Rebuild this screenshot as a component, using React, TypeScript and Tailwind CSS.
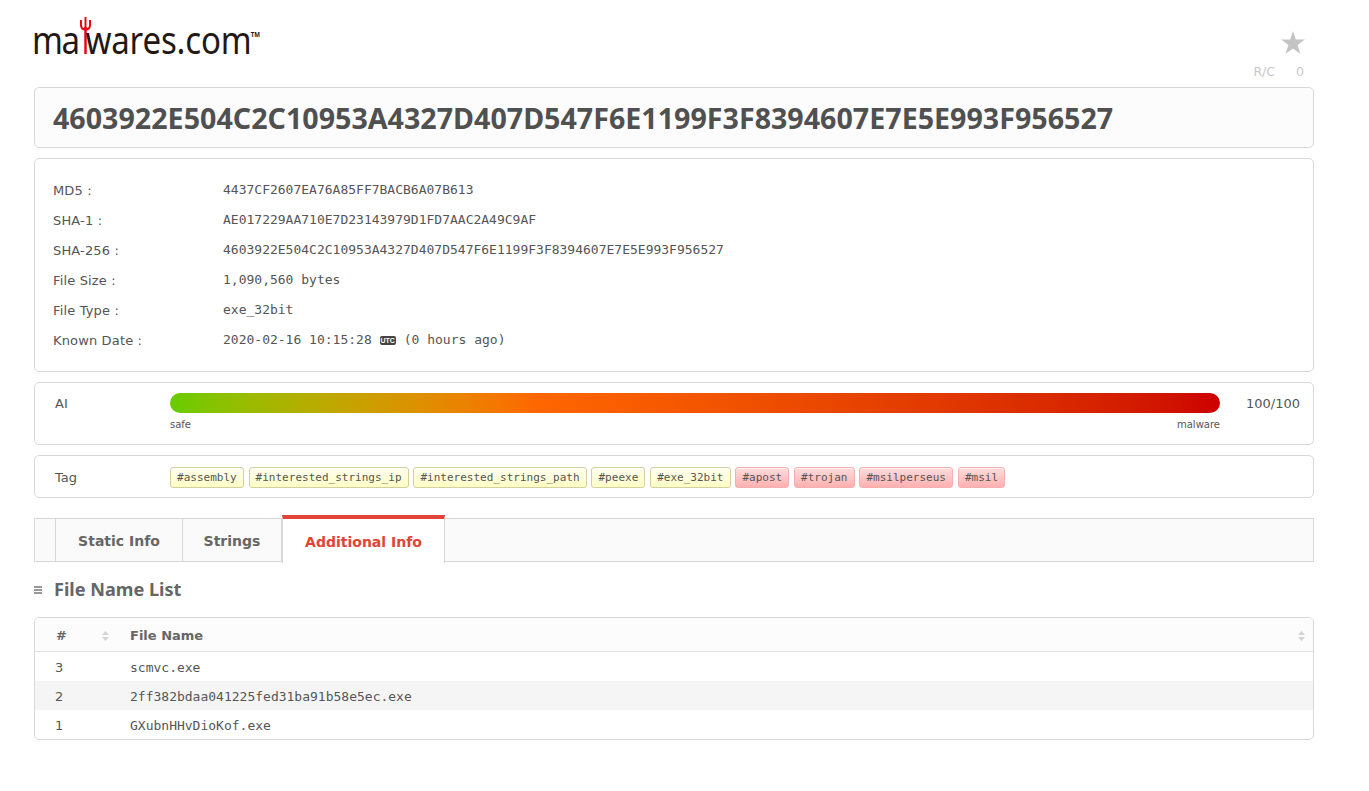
const INFO_ROWS: { label: string; value: React.ReactNode }[] = [
  { label: 'MD5 :', value: '4437CF2607EA76A85FF7BACB6A07B613' },
  { label: 'SHA-1 :', value: 'AE017229AA710E7D23143979D1FD7AAC2A49C9AF' },
  { label: 'SHA-256 :', value: '4603922E504C2C10953A4327D407D547F6E1199F3F8394607E7E5E993F956527' },
  { label: 'File Size :', value: '1,090,560 bytes' },
  { label: 'File Type :', value: 'exe_32bit' },
  {
    label: 'Known Date :',
    value: (
      <span className="flex items-center">
        2020-02-16 10:15:28
        <span className="mx-[8px] h-[9px] w-[16px] rounded-[2px] bg-[#444] text-center font-['Liberation_Sans',sans-serif] text-[7px] leading-[9px] font-bold text-white">
          UTC
        </span>
        (0 hours ago)
      </span>
    ),
  },
]

const YELLOW_TAGS = ['#assembly', '#interested_strings_ip', '#interested_strings_path', '#peexe', '#exe_32bit']
const RED_TAGS = ['#apost', '#trojan', '#msilperseus', '#msil']

const FILES = [
  { id: 3, name: 'scmvc.exe' },
  { id: 2, name: '2ff382bdaa041225fed31ba91b58e5ec.exe' },
  { id: 1, name: 'GXubnHHvDioKof.exe' },
]

function Tag({ text, red }: { text: string; red?: boolean }) {
  return (
    <span
      className={`h-[21px] rounded-[3px] border px-[6px] font-['DejaVu_Sans_Mono',monospace] text-[11px] leading-[20px] tracking-[0.01px] shadow-[inset_0_1px_0_rgba(255,255,255,0.7)] ${
        red
          ? 'border-[#f4b0b0] bg-gradient-to-b from-[#ffdcdc] to-[#ffb0b0] text-[#555]'
          : 'border-[#d3cf9f] bg-gradient-to-b from-[#fffdf0] to-[#ffffc4] text-[#555]'
      }`}
    >
      {text}
    </span>
  )
}

function SortArrows() {
  return (
    <svg width="7" height="10" viewBox="0 0 7 10" className="fill-[#d4d4d4]">
      <path d="M3.5 0 7 4H0z" />
      <path d="M3.5 10 0 6h7z" />
    </svg>
  )
}

function Logo() {
  return (
    <div className="flex h-[37px] origin-left scale-x-[0.87] items-end font-['Noto_Sans',sans-serif] text-[38px] leading-[37px] text-[#231815]">
      <span className="tracking-[-1.5px]">ma</span>
      <svg width="13" height="37" viewBox="0 0 13 37" className="mr-[-6.5px] mb-[3.8px] ml-[1px] shrink-0">
        <path d="M5.1 10h2.8v27H5.1z" fill="#e60012" />
        <path d="M1.3 3v5c0 3 2.3 4.4 5.2 4.4s5.2-1.4 5.2-4.4V3" fill="none" stroke="#e60012" strokeWidth="2.2" />
        <path d="M6.5 0v12" stroke="#e60012" strokeWidth="2.2" />
      </svg>
      <span className="tracking-[-0.18px]">wares.com</span>
      <span className="mb-[20px] ml-[-1px] text-[7px] leading-[6px] font-bold">TM</span>
    </div>
  )
}

export default function App() {
  return (
    <div className="ml-[34px] min-h-[791px] w-[1280px] bg-white font-['DejaVu_Sans',sans-serif] text-[13px] text-[#555]">
      <header className="flex h-[87px] justify-between">
        <div className="ml-[-2px] pt-[21px]">
          <Logo />
        </div>
        <div className="flex flex-col items-end pt-[31px] pr-[10px] text-[12.5px] text-[#c8c8c8]">
          <svg width="24" height="23" viewBox="0 0 26 25" className="mr-[-1px] fill-[#c4c4c4]">
            <path d="M13 0l3.1 9.3H26l-8 5.8 3.1 9.6L13 18.9l-8.1 5.8L8 15.1 0 9.3h9.9z" />
          </svg>
          <div className="mt-[9px] flex gap-[21px] leading-[18px]">
            <span>R/C</span>
            <span>0</span>
          </div>
        </div>
      </header>

      <h1 className="flex h-[61px] items-center rounded-[5px] border border-[#d8d8d8] bg-[#fcfcfc] pt-[2px] pl-[18px] font-['Noto_Sans',sans-serif] text-[28.64px] font-bold text-[#505050]">
        4603922E504C2C10953A4327D407D547F6E1199F3F8394607E7E5E993F956527
      </h1>

      <section className="mt-[10px] flex h-[214px] flex-col rounded-[5px] border border-[#d8d8d8] px-[18px] pt-[16px]">
        {INFO_ROWS.map((row) => (
          <div key={row.label} className="flex h-[30px] items-center">
            <span className="w-[170px] pt-[2px] tracking-[0.15px]">{row.label}</span>
            <span className="font-['DejaVu_Sans_Mono',monospace] text-[13px] text-[#555]">{row.value}</span>
          </div>
        ))}
      </section>

      <section className="mt-[10px] flex h-[63px] rounded-[5px] border border-[#d8d8d8] pt-[10px] pl-[20px]">
        <span className="w-[115px] pt-[1px] leading-[20px]">AI</span>
        <div className="w-[1050px]">
          <div className="h-[20px] rounded-full bg-gradient-to-r from-[#66cc00] via-[#ff6600] via-35% to-[#cc0000]" />
          <div className="mt-[5px] flex justify-between text-[10px] leading-[14px]">
            <span>safe</span>
            <span>malware</span>
          </div>
        </div>
        <span className="ml-[26px] pt-[1px] leading-[20px]">100/100</span>
      </section>

      <section className="mt-[10px] flex h-[43px] items-center rounded-[5px] border border-[#d8d8d8] pt-[2px] pl-[20px]">
        <span className="w-[115px]">Tag</span>
        <div className="flex gap-[4.9px]">
          {YELLOW_TAGS.map((t) => (
            <Tag key={t} text={t} />
          ))}
          {RED_TAGS.map((t) => (
            <Tag key={t} text={t} red />
          ))}
        </div>
      </section>

      <nav className="mt-[20px] flex h-[44px] border border-[#d8d8d8] bg-[#fafafa] text-[14px] font-bold">
        <div className="w-[21px] border-r border-[#d8d8d8]" />
        <div className="flex w-[127px] items-center justify-center border-r border-[#d8d8d8] pt-[2px] text-[#666]">Static Info</div>
        <div className="flex w-[99px] items-center justify-center border-r border-[#d8d8d8] pt-[2px] text-[#666]">Strings</div>
        <div className="relative mt-[-4px] mb-[-1px] flex h-[48px] w-[163px] items-center justify-center border-x border-t-4 border-x-[#d8d8d8] border-t-[#e04436] bg-white pt-[2px] text-[#e04436]">
          Additional Info
        </div>
      </nav>

      <div className="mt-[17px] flex h-[22px] items-center">
        <svg width="8" height="8" viewBox="0 0 8 8" className="mr-[12px] fill-[#999]">
          <path d="M0 0h8v2H0zM0 3h8v2H0zM0 6h8v2H0z" />
        </svg>
        <h2 className="font-['Noto_Sans',sans-serif] text-[18.1px] font-bold text-[#666]">File Name List</h2>
      </div>

      <div className="mt-[16px] overflow-hidden rounded-[5px] border border-[#d8d8d8]">
        <div className="flex h-[34px] items-center border-b border-[#e2e2e2] bg-[#fcfcfc] pt-[2px] font-bold text-[#666]">
          <div className="flex w-[95px] items-center justify-between pr-[21px] pl-[21px]">
            <span>#</span>
            <SortArrows />
          </div>
          <div className="flex flex-1 items-center justify-between pr-[8px]">
            <span>File Name</span>
            <SortArrows />
          </div>
        </div>
        {FILES.map((f, i) => (
          <div key={f.id} className={`flex h-[29px] items-center pt-[2px] ${i === 1 ? 'bg-[#f5f5f5]' : ''}`}>
            <span className="w-[95px] pl-[20px]">{f.id}</span>
            <span className="font-['DejaVu_Sans_Mono',monospace]">{f.name}</span>
          </div>
        ))}
      </div>
    </div>
  )
}
